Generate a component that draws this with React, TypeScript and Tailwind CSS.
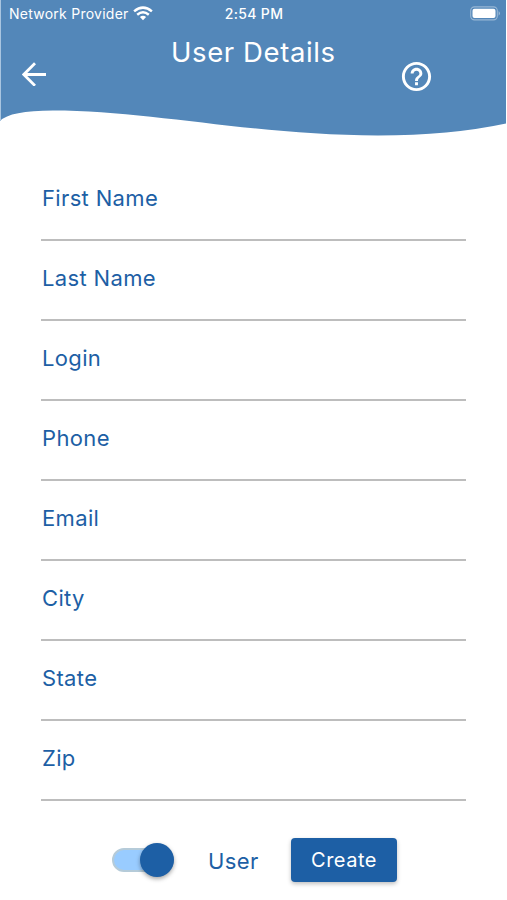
const fields = ['First Name', 'Last Name', 'Login', 'Phone', 'Email', 'City', 'State', 'Zip'];

function Wifi() {
  return (
    <svg width="20" height="15" viewBox="0 0 20 15" className="mb-px ml-1" fill="none" stroke="#fff" strokeWidth="2.5">
      <path d="M1.1 5.4 Q10 -2.1 18.9 5.4" />
      <path d="M4.2 8.7 Q10 3.9 15.8 8.7" />
      <path d="M6.9 11 Q10 8.5 13.1 11 L10 14.2Z" fill="#fff" stroke="none" />
    </svg>
  );
}

function Battery() {
  return (
    <svg width="31" height="15" viewBox="0 0 31 15" className="mb-[2px] ml-auto">
      <rect x="0.7" y="0.9" width="26.6" height="13" rx="3.8" fill="none" stroke="#fff" strokeOpacity="0.4" strokeWidth="1.1" />
      <rect x="2.5" y="2.7" width="23" height="9.4" rx="2" fill="#fff" />
      <path d="M28.7 5 Q31 7.3 28.7 9.7Z" fill="#fff" fillOpacity="0.5" />
    </svg>
  );
}

export default function App() {
  return (
    <div className="h-[900px] w-[507px] overflow-hidden bg-white font-['Inter',sans-serif] text-[#1d5fa5]">
      <header className="mr-px h-[105px] border-l border-[#a9c5e0] bg-[#5387b9] text-white">
        <div className="grid h-7 grid-cols-3 items-center pr-[5px] pl-2 text-[14px] leading-[28px]">
          <div className="flex items-center whitespace-nowrap">
            <span className="text-[14px] tracking-[0.25px]">Network Provider</span>
            <Wifi />
          </div>
          <span className="pr-[2px] text-center text-[14px] font-medium tracking-[0.35px]">2:54 PM</span>
          <Battery />
        </div>
        <div className="flex h-[77px] items-start">
          <svg width="24" height="24" viewBox="0 0 24 24" className="mt-[34px] ml-[21px]" fill="none" stroke="#fff" strokeWidth="2.8">
            <path d="M24 12.5H3M13 1.3L1.8 12.5L13 23.7" />
          </svg>
          <h1 className="mt-[6px] ml-[125px] w-[166px] text-[27.5px] leading-[36px] font-normal tracking-[0.6px] whitespace-nowrap">
            User Details
          </h1>
          <svg width="35" height="35" viewBox="0 0 24 24" className="mt-[31px] ml-[62px]" fill="#fff">
            <path d="M11 18h2v-2h-2v2zm1-16C6.48 2 2 6.48 2 12s4.48 10 10 10 10-4.48 10-10S17.52 2 12 2zm0 18c-4.41 0-8-3.59-8-8s3.59-8 8-8 8 3.59 8 8-3.59 8-8 8zm0-14c-2.21 0-4 1.79-4 4h2c0-1.1.9-2 2-2s2 .9 2 2c0 2-3 1.75-3 5h2c0-2.25 3-2.5 3-5 0-2.21-1.79-4-4-4z" />
          </svg>
        </div>
      </header>
      <svg width="507" height="33" viewBox="0 105 507 33" className="block">
        <path d="M0 105H506V123.5Q450 135.5 378 135.5C255 135.5 150 110.5 53 110.5Q10 110.5 0 121Z" fill="#5387b9" />
        <path d="M0.5 105V121" stroke="#a9c5e0" />
      </svg>
      <main className="mt-[23px] ml-[41px] w-[425px]">
        {fields.map((name) => (
          <label key={name} className="block h-20 border-b-2 border-[#bdbdbd] pt-[22px] pl-px text-[22px] leading-[30px] tracking-[0.35px]">
            {name}
          </label>
        ))}
      </main>
      <div className="mt-[37px] ml-[112px] flex h-11 items-center">
        <div className="flex h-6 w-[62px] items-center rounded-full border-2 border-[#b5cbd9] bg-[#99ccff]">
          <span className="-mr-[2px] ml-auto size-[34px] rounded-full bg-[#1d5fa5] shadow-[0_2px_4px_rgba(0,0,0,0.35)]" />
        </div>
        <span className="ml-[34px] w-[83px] pt-px text-[22px] leading-[30px] tracking-[0.4px]">User</span>
        <button className="h-11 w-[106px] rounded-[4px] bg-[#1d5fa5] text-[20px] tracking-[0.5px] text-white shadow-[0_2px_4px_rgba(0,0,0,0.25)]">
          Create
        </button>
      </div>
    </div>
  );
}
